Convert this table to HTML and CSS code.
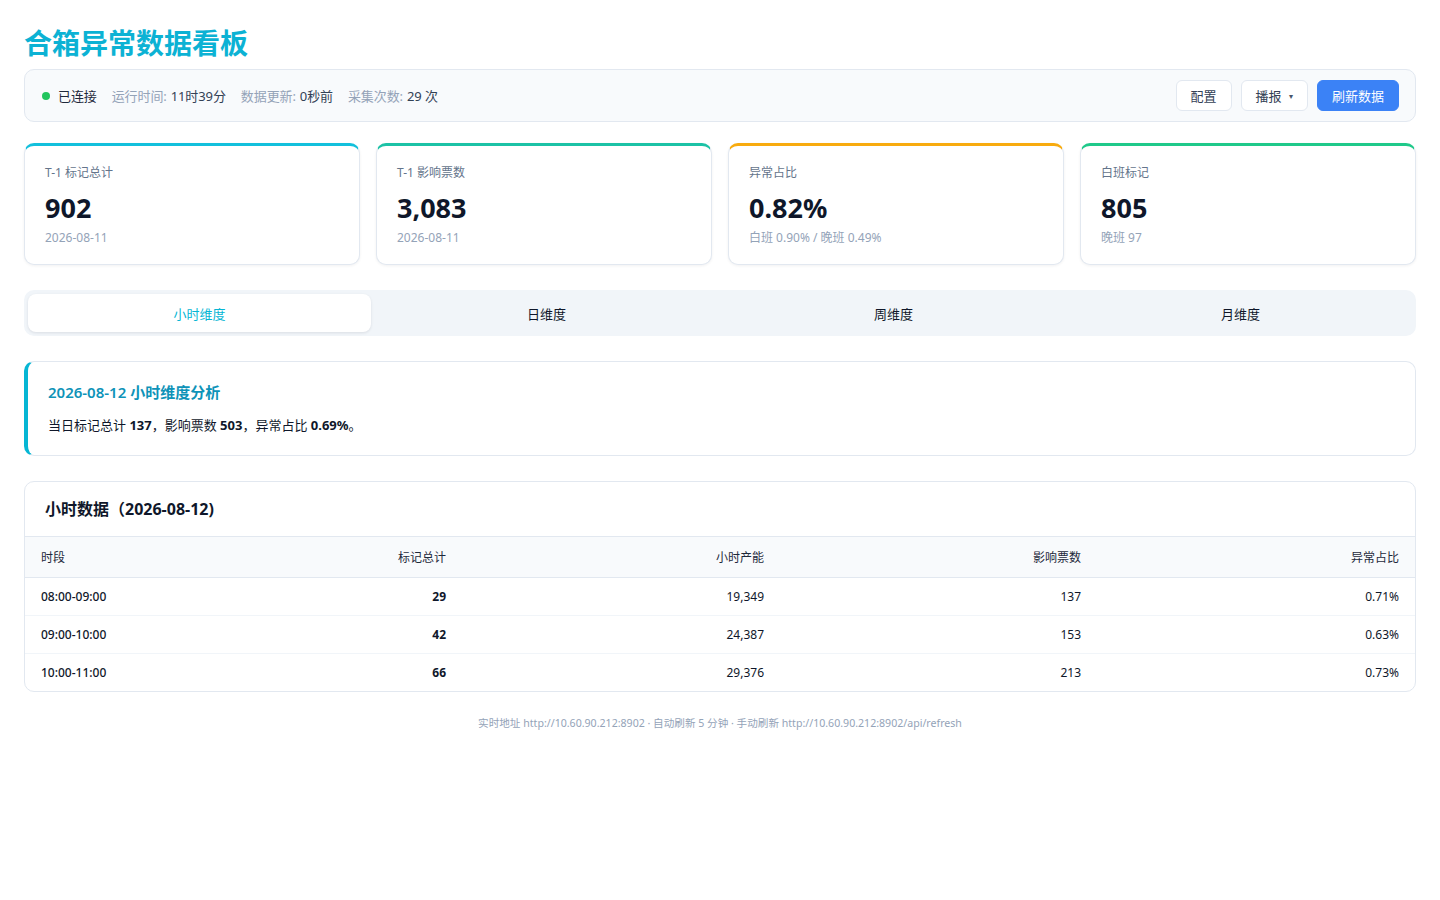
FILE: index.html
```html
<!DOCTYPE html>
<html lang="zh-CN">
<head>
<meta charset="utf-8">
<title>合箱异常数据看板</title>
<link rel="stylesheet" href="styles.css">
</head>
<body>
<div class="page">
  <h1 class="title">合箱异常数据看板</h1>

  <div class="status-bar">
    <div class="status-items">
      <span class="status-item"><span class="dot"></span><span class="strong">已连接</span></span>
      <span class="status-item"><span class="muted">运行时间:</span> 11时39分</span>
      <span class="status-item"><span class="muted">数据更新:</span> 0秒前</span>
      <span class="status-item"><span class="muted">采集次数:</span> 29 次</span>
    </div>
    <div class="actions">
      <button class="btn">配置</button>
      <button class="btn">播报 <span class="caret">▾</span></button>
      <button class="btn btn-primary">刷新数据</button>
    </div>
  </div>

  <div class="cards">
    <div class="card card-cyan">
      <div class="card-label">T-1 标记总计</div>
      <div class="card-value">902</div>
      <div class="card-sub">2026-08-11</div>
    </div>
    <div class="card card-teal">
      <div class="card-label">T-1 影响票数</div>
      <div class="card-value">3,083</div>
      <div class="card-sub">2026-08-11</div>
    </div>
    <div class="card card-amber">
      <div class="card-label">异常占比</div>
      <div class="card-value">0.82%</div>
      <div class="card-sub">白班 0.90% / 晚班 0.49%</div>
    </div>
    <div class="card card-green">
      <div class="card-label">白班标记</div>
      <div class="card-value">805</div>
      <div class="card-sub">晚班 97</div>
    </div>
  </div>

  <div class="tabs">
    <div class="tab active">小时维度</div>
    <div class="tab">日维度</div>
    <div class="tab">周维度</div>
    <div class="tab">月维度</div>
  </div>

  <div class="analysis">
    <div class="analysis-title">2026-08-12 小时维度分析</div>
    <div class="analysis-text">当日标记总计 <b>137</b>，影响票数 <b>503</b>，异常占比 <b>0.69%</b>。</div>
  </div>

  <div class="table-card">
    <div class="table-title">小时数据（2026-08-12)</div>
    <table class="data-table">
      <colgroup>
        <col class="c1"><col class="c2"><col class="c3"><col class="c4"><col class="c5">
      </colgroup>
      <thead>
        <tr>
          <th class="left">时段</th>
          <th>标记总计</th>
          <th>小时产能</th>
          <th>影响票数</th>
          <th>异常占比</th>
        </tr>
      </thead>
      <tbody>
        <tr><td class="left period">08:00-09:00</td><td class="bold">29</td><td>19,349</td><td>137</td><td>0.71%</td></tr>
        <tr><td class="left period">09:00-10:00</td><td class="bold">42</td><td>24,387</td><td>153</td><td>0.63%</td></tr>
        <tr><td class="left period">10:00-11:00</td><td class="bold">66</td><td>29,376</td><td>213</td><td>0.73%</td></tr>
      </tbody>
    </table>
  </div>

  <div class="footer">实时地址 http://10.60.90.212:8902 · 自动刷新 5 分钟 · 手动刷新 http://10.60.90.212:8902/api/refresh</div>
</div>
</body>
</html>
```

FILE: styles.css
```css
* { box-sizing: border-box; }
html, body { margin: 0; padding: 0; background: #ffffff; }
body {
  font-family: "Noto Sans", "Noto Sans CJK SC", sans-serif;
  color: #0f172a;
}
.page {
  padding: 24px 24px 40px;
}
.title {
  margin: 0 0 6px;
  font-size: 28px;
  line-height: 39px;
  font-weight: 700;
  color: #0cb2d4;
}

/* status bar */
.status-bar {
  display: flex;
  align-items: center;
  justify-content: space-between;
  height: 53px;
  padding: 0 16px;
  background: #f8fafc;
  border: 1px solid #e2e8f0;
  border-radius: 10px;
}
.status-items {
  display: flex;
  align-items: center;
  gap: 15px;
  font-size: 13px;
  letter-spacing: -0.1px;
  color: #334155;
}
.status-item { display: flex; align-items: center; }
.status-item .muted { color: #94a3b8; margin-right: 4px; }
.status-item .strong { color: #1e293b; }
.dot {
  width: 8px; height: 8px; border-radius: 50%;
  background: #22c55e;
  margin: 0 8px 0 1px;
}
.actions { display: flex; gap: 9px; }
.btn {
  height: 31px;
  padding: 0 14px;
  font-family: inherit;
  font-size: 13px;
  color: #334155;
  background: #ffffff;
  border: 1px solid #e2e8f0;
  border-radius: 6px;
}
.btn .caret { font-size: 8px; margin-left: 4px; vertical-align: 2px; color: #475569; }
.btn-primary {
  background: #3b82f6;
  border-color: #3b82f6;
  color: #ffffff;
}

/* cards */
.cards {
  display: grid;
  grid-template-columns: repeat(4, 1fr);
  gap: 16px;
  margin-top: 21px;
}
.card {
  height: 122px;
  padding: 18px 20px 0;
  background: #ffffff;
  border: 1px solid #e2e8f0;
  border-top: 3px solid #06b6d4;
  border-radius: 10px;
  box-shadow: 0 1px 3px rgba(15, 23, 42, 0.06);
}
.card-cyan { border-top-color: #12c0dc; }
.card-teal { border-top-color: #1cc2a6; }
.card-amber { border-top-color: #f8ab0e; }
.card-green { border-top-color: #1fc98a; }
.card-label {
  font-size: 12px;
  line-height: 17px;
  color: #64748b;
}
.card-value {
  margin-top: 9px;
  font-size: 27px;
  line-height: 36px;
  font-weight: 700;
  color: #0f172a;
}
.card-sub {
  margin-top: 3px;
  font-size: 12px;
  line-height: 17px;
  color: #94a3b8;
}

/* tabs */
.tabs {
  display: grid;
  grid-template-columns: repeat(4, 1fr);
  gap: 4px;
  margin-top: 25px;
  padding: 4px;
  height: 46px;
  background: #f1f5f9;
  border-radius: 10px;
}
.tab {
  display: flex;
  align-items: center;
  justify-content: center;
  font-size: 13px;
  color: #0f172a;
  border-radius: 8px;
}
.tab.active {
  background: #ffffff;
  color: #06b6d4;
  box-shadow: 0 1px 3px rgba(15, 23, 42, 0.1);
}

/* analysis */
.analysis {
  margin-top: 25px;
  padding: 19px 20px 20px;
  border: 1px solid #e2e8f0;
  border-left: 4px solid #06b6d4;
  border-radius: 10px;
  background: #ffffff;
}
.analysis-title {
  font-size: 15px;
  line-height: 22px;
  font-weight: 600;
  color: #0e93b8;
}
.analysis-text {
  margin-top: 12px;
  font-size: 13px;
  line-height: 20px;
  color: #0f172a;
}
.analysis-text b { font-weight: 700; }

/* table */
.table-card {
  margin-top: 25px;
  border: 1px solid #e2e8f0;
  border-radius: 10px;
  overflow: hidden;
  background: #ffffff;
}
.table-title {
  padding: 16px 20px;
  font-size: 16px;
  line-height: 22px;
  font-weight: 700;
  border-bottom: 1px solid #e2e8f0;
}
.data-table {
  width: 100%;
  border-collapse: collapse;
  table-layout: fixed;
  font-size: 12px;
}
.c1 { width: 119px; }
.c2 { width: 318px; }
.c3 { width: 318px; }
.c4 { width: 317px; }
.c5 { width: 318px; }
.data-table th {
  height: 40px;
  padding: 0 16px;
  text-align: right;
  font-weight: 400;
  color: #1e293b;
  background: #f8fafc;
  border-bottom: 1px solid #e2e8f0;
}
.data-table td {
  height: 38px;
  padding: 0 16px;
  text-align: right;
  color: #0f172a;
  border-bottom: 1px solid #f1f5f9;
  white-space: nowrap;
}
.data-table tbody tr:last-child td { border-bottom: none; }
.data-table .left { text-align: left; }
.data-table .period { font-weight: 500; }
.data-table .bold { font-weight: 700; }

.footer {
  margin-top: 23px;
  text-align: center;
  font-size: 10.6px;
  line-height: 16px;
  color: #94a3b8;
}
```
